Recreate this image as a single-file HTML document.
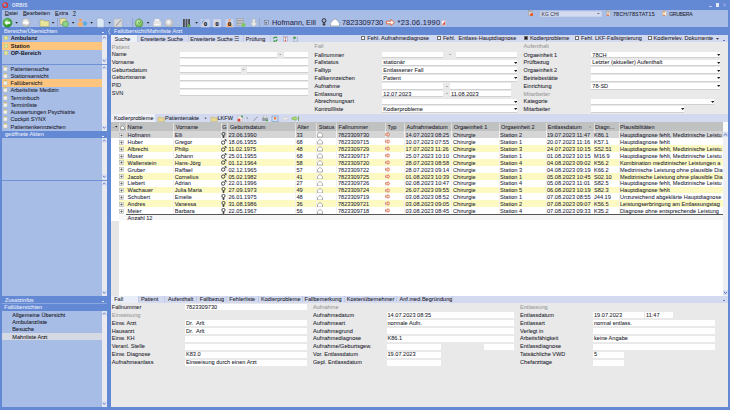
<!DOCTYPE html>
<html><head><meta charset="utf-8">
<style>
html,body{margin:0;padding:0;width:730px;height:410px;overflow:hidden;background:#6489d4;}
body{font-family:"Liberation Sans",sans-serif;font-size:5.6px;color:#1e1e2e;}
.a{position:absolute;}
u{text-decoration-thickness:0.5px;text-underline-offset:0.3px;text-decoration-color:#555a70;}
.t{position:absolute;white-space:nowrap;line-height:7px;-webkit-text-stroke-width:0.06px;}
.sb{width:5px;background:#e9eaf0;}
.sb:before{content:"";position:absolute;left:0.5px;top:0.5px;width:4px;height:5px;background:#dde3f3;}
.sb:after{content:"";position:absolute;left:0.5px;bottom:0.5px;width:4px;height:5px;background:#dde3f3;}
#frame{position:absolute;left:0;top:0;width:730px;height:410px;background:#6489d4;overflow:hidden;}
</style></head><body>
<div id="frame">
  <!-- title bar -->
  <div class="a" style="left:0;top:0;width:730px;height:9.5px;background:#6489d4"></div>
  <svg class="a" style="left:2px;top:1.8px" width="6.5" height="6.5" viewBox="0 0 10 10"><circle cx="5" cy="5" r="3.6" fill="none" stroke="#e0302a" stroke-width="2"/><circle cx="3.2" cy="3" r="1.2" fill="#f0a0a0"/></svg>
  <div class="t" style="left:11.9px;top:1.5px;font-size:4.6px;line-height:7px;color:#e4eaf8;font-weight:bold;letter-spacing:0.2px;-webkit-text-stroke-width:0">ORBIS</div>
  <div class="a" style="left:709px;top:5.8px;width:2.8px;height:0.9px;background:#b8c8f0"></div>
  <div class="a" style="left:715.6px;top:3px;width:3.6px;height:4px;background:#e2e8f8"></div>
  <svg class="a" style="left:722.8px;top:2.9px" width="3.4" height="4" viewBox="0 0 3.4 4"><path d="M0.4 0.4 L3 3.6 M3 0.4 L0.4 3.6" stroke="#a8b4ec" stroke-width="0.7"/></svg>
  <!-- menu + toolbar -->
  <div class="a" style="left:2px;top:9.6px;width:726px;height:17.4px;background:#a8bde6"></div>
  <div class="t" style="left:4.8px;top:10.2px;"><u>D</u>atei</div>
  <div class="t" style="left:23px;top:10.2px;"><u>B</u>earbeiten</div>
  <div class="t" style="left:55px;top:10.2px;"><u>E</u>xtra</div>
  <div class="t" style="left:72.7px;top:10.2px;"><u>?</u></div>
  <!-- toolbar icons -->
  <svg class="a" style="left:0;top:16.7px" width="450" height="11" viewBox="0 0 450 11">
    <defs>
      <radialGradient id="gg" cx="0.4" cy="0.35" r="0.7"><stop offset="0" stop-color="#7fd46a"/><stop offset="1" stop-color="#1f8a1f"/></radialGradient>
      <radialGradient id="gl" cx="0.4" cy="0.35" r="0.7"><stop offset="0" stop-color="#c8f0a8"/><stop offset="1" stop-color="#5aaa48"/></radialGradient>
      <radialGradient id="gr" cx="0.4" cy="0.35" r="0.7"><stop offset="0" stop-color="#f4f4f4"/><stop offset="1" stop-color="#b8b8b8"/></radialGradient>
    </defs>
    <!-- back -->
    <circle cx="7.5" cy="5.8" r="4.5" fill="url(#gg)" stroke="#2a7a2a" stroke-width="0.4"/>
    <path d="M4.5 5.8 L7.2 3.3 L7.2 4.8 L10.3 4.8 L10.3 6.8 L7.2 6.8 L7.2 8.3 Z" fill="#fff"/>
    <path d="M15.3 5 h2.6 l-1.3 1.7z" fill="#222"/>
    <!-- forward grey -->
    <circle cx="26" cy="5.8" r="4.2" fill="url(#gr)" stroke="#aaa" stroke-width="0.4"/>
    <path d="M29 5.8 L26.3 3.3 L26.3 4.8 L23.2 4.8 L23.2 6.8 L26.3 6.8 L26.3 8.3 Z" fill="#fff"/>
    <path d="M33.8 5 h2.6 l-1.3 1.7z" fill="#c0c8d8"/>
    <!-- folder -->
    <path d="M40 3 h3.5 l1 1 h4.5 v5.5 h-9 z" fill="#e8e59a" stroke="#8a8a50" stroke-width="0.4"/>
    <path d="M51.8 5 h2.6 l-1.3 1.7z" fill="#222"/>
    <rect x="57.2" y="1" width="0.6" height="9.5" fill="#8899bb"/>
    <!-- clipboard clock -->
    <rect x="60" y="1.5" width="6" height="6" fill="#e8e0a0" stroke="#9a8a50" stroke-width="0.4"/>
    <circle cx="65.5" cy="7" r="3" fill="#8fd08a" stroke="#3a8a3a" stroke-width="0.5"/>
    <path d="M71.8 5 h2.6 l-1.3 1.7z" fill="#222"/>
    <!-- persons -->
    <circle cx="80.5" cy="3" r="1.6" fill="#f0a060"/>
    <ellipse cx="80.5" cy="7.2" rx="2.8" ry="2.3" fill="#f0b070"/>
    <circle cx="85" cy="6.5" r="2.2" fill="#60a8e0"/>
    <path d="M90.3 5 h2.6 l-1.3 1.7z" fill="#222"/>
    <!-- document -->
    <path d="M97 1.2 h5 l2 2 v7 h-7 z" fill="#dfeaf7" stroke="#7a92b8" stroke-width="0.4"/>
    <path d="M108.3 5 h2.6 l-1.3 1.7z" fill="#222"/>
    <!-- pen grey -->
    <rect x="114" y="2" width="8" height="8" fill="#d8d8d8" stroke="#b0b0b0" stroke-width="0.4"/>
    <path d="M116 9 L121 3" stroke="#888" stroke-width="0.8"/>
    <path d="M126.8 5 h2.6 l-1.3 1.7z" fill="#c0c8d8"/>
    <rect x="132.3" y="1" width="0.6" height="9.5" fill="#8899bb"/>
    <!-- green clock -->
    <circle cx="139" cy="6.2" r="3.9" fill="url(#gl)" stroke="#4a8a3a" stroke-width="0.45"/>
    <rect x="138.4" y="1.3" width="1.2" height="1" fill="#6a8a5a"/>
    <path d="M138.2 5 L139.2 6.4 L141 4.6" stroke="#2a5a2a" stroke-width="0.55" fill="none"/>
    <path d="M146.8 5 h2.6 l-1.3 1.7z" fill="#222"/>
    <!-- printer grey -->
    <path d="M153.3 9.6 V5.6 Q153.3 3.6 155.5 3.6 H159 Q161.3 3.6 161.3 5.6 V9.6 Z" fill="#e4e4e4" stroke="#b8b8b8" stroke-width="0.4"/>
    <rect x="154.6" y="2" width="4.8" height="2.6" fill="#f6f6f6" stroke="#c0c0c0" stroke-width="0.3"/>
    <rect x="154.6" y="7" width="4.8" height="1" fill="#fafafa"/>
    <!-- info grey -->
    <circle cx="169" cy="6" r="4" fill="url(#gr)" stroke="#aaa" stroke-width="0.4"/>
    <rect x="168.6" y="3.5" width="0.9" height="3.8" fill="#fff"/>
    <path d="M176.8 5 h2.6 l-1.3 1.7z" fill="#c0c8d8"/>
    <!-- bars -->
    <rect x="183" y="2" width="1.8" height="8" fill="#4a4a4a"/>
    <rect x="185.6" y="2" width="1.8" height="8" fill="#505050"/>
    <rect x="188.2" y="2" width="1.8" height="6" fill="#4a4a4a"/>
    <path d="M187.8 6.8 l3.6 2 l-3.6 2z" fill="#60b048"/>
    <path d="M195.3 5 h2.6 l-1.3 1.7z" fill="#222"/>
    <!-- 0 boxes -->
    <rect x="200.8" y="2.3" width="9" height="8" fill="#cbd3ec"/><path d="M202 6.5 Q202 3.6 204.5 3.4" fill="none" stroke="#5a90c8" stroke-width="0.9"/>
    <text x="205.6" y="8.6" font-size="5.6" font-weight="bold" text-anchor="middle" fill="#111" stroke="#111" stroke-width="0.2" font-family="Liberation Sans">0</text>
    <rect x="213" y="2.3" width="8" height="8" fill="#cbd3ec"/><path d="M213.8 2.8 H220.2 L217 6.3 L220.2 9.8 H213.8 L217 6.3Z" fill="#d8d8d8"/>
    <text x="217" y="8.6" font-size="5.6" font-weight="bold" text-anchor="middle" fill="#111" stroke="#111" stroke-width="0.2" font-family="Liberation Sans">0</text>
    <rect x="225.5" y="2.3" width="8" height="8" fill="#cbd3ec"/>
    <circle cx="229.5" cy="3.6" r="1.4" fill="#f0a878"/>
    <path d="M226.5 10 Q226.5 5.2 229.5 5.2 Q232.5 5.2 232.5 10Z" fill="#f2b080"/>
    <text x="229.5" y="8.9" font-size="5.6" font-weight="bold" text-anchor="middle" fill="#111" stroke="#111" stroke-width="0.2" font-family="Liberation Sans">0</text>
    <!-- stack -->
    <rect x="237" y="1.5" width="6.5" height="2" fill="#c8c8c8" stroke="#777" stroke-width="0.3"/>
    <rect x="237" y="4" width="6.5" height="2" fill="#c8c8c8" stroke="#777" stroke-width="0.3"/>
    <rect x="237" y="6.5" width="6.5" height="2" fill="#c8c8c8" stroke="#777" stroke-width="0.3"/>
    <circle cx="243.5" cy="8" r="2" fill="#7cc860"/>
    <!-- down arrow grey -->
    <path d="M252.3 2 h3 v4 h2 l-3.5 4 l-3.5 -4 h2 z" fill="#e8e8e8" stroke="#a8a8a8" stroke-width="0.4"/>
    <rect x="259.3" y="1" width="0.6" height="9.5" fill="#8899bb"/>
    <!-- expander -->
    <rect x="264.2" y="3.7" width="4" height="4" fill="#c8d2ea" stroke="#55607a" stroke-width="0.45"/>
    <path d="M265.1 5.7 h2.2 M266.2 4.6 v2.2" stroke="#223" stroke-width="0.5"/>
  </svg>
  <div class="t" style="left:272px;top:18.2px;font-size:7.4px;line-height:10px;color:#22254a">Hofmann, Elli</div>
  <svg class="a" style="left:320.5px;top:18px" width="6" height="8" viewBox="0 0 6 8"><circle cx="3" cy="2.6" r="1.9" fill="none" stroke="#2a2a2a" stroke-width="1"/><path d="M3 4.5 V7.8 M1.5 6.2 H4.5" stroke="#2a2a2a" stroke-width="1"/></svg>
  <svg class="a" style="left:329.5px;top:18px" width="10" height="8.5" viewBox="0 0 10 8.5"><path d="M0.6 8 V5.2 Q2 2.2 5 0.7 Q8 2.2 9.4 5.2 V8 Z" fill="#fff" stroke="#8a8a8a" stroke-width="0.6"/></svg>
  <div class="t" style="left:342px;top:18.2px;font-size:7.4px;line-height:10px;color:#22254a">7823309730</div>
  <svg class="a" style="left:386px;top:19px" width="9" height="7" viewBox="0 0 9 7"><path d="M0.5 2.2 h4.5 V0.5 L8.5 3.5 L5 6.5 V4.8 H0.5 Z" fill="#fff" stroke="#e06030" stroke-width="0.9"/></svg>
  <div class="t" style="left:397.5px;top:18.2px;font-size:7.4px;line-height:10px;color:#22254a;letter-spacing:0.27px">*23.06.1990</div>
  <svg class="a" style="left:440.5px;top:19.8px" width="5" height="6" viewBox="0 0 5 6"><rect x="0.3" y="0.3" width="4.4" height="5.4" fill="#f4eeee" stroke="#b0a0a0" stroke-width="0.4"/><path d="M1 4.8 L4 1.5 L4 4.8Z" fill="#e04040"/></svg>
  <!-- right toolbar -->
  <svg class="a" style="left:528.4px;top:10.3px" width="5.5" height="6.4" viewBox="0 0 5.5 6.4"><rect x="0.4" y="0.4" width="4" height="5.2" fill="#d8d4d4" stroke="#8a8a8a" stroke-width="0.4"/><rect x="1" y="1.3" width="2.8" height="0.5" fill="#777"/><circle cx="3.6" cy="4.6" r="1.6" fill="#e85828"/></svg>
  <div class="a" style="left:539.7px;top:10.5px;width:62.3px;height:6.2px;background:#d4dbf1;box-shadow:inset 0 0 0 0.4px #bcc6e2"></div>
  <div class="t" style="left:541.6px;top:10.5px;font-size:4.9px;line-height:7px;color:#333340;letter-spacing:0.1px">KG CHI</div>
  <svg class="a" style="left:596.8px;top:12.9px" width="2.8" height="1.6" viewBox="0 0 2.8 1.6"><path d="M0 0 H2.8 L1.4 1.6 Z" fill="#667"/></svg>
  <svg class="a" style="left:606.2px;top:10px" width="5" height="6.3" viewBox="0 0 5 6.3"><rect x="0.4" y="0.4" width="4" height="5.4" fill="#e8e4e4" stroke="#909090" stroke-width="0.4"/><rect x="1" y="1.4" width="2.8" height="0.5" fill="#888"/><rect x="1" y="2.6" width="2.8" height="0.5" fill="#888"/><path d="M0.4 5.8 L2.2 3.6 L3 5.8Z" fill="#e86a30"/></svg>
  <div class="t" style="left:613px;top:10.8px;font-size:5.3px;line-height:7px;letter-spacing:0.17px">78CH/78STAT15</div>
  <svg class="a" style="left:661.6px;top:10px" width="5.5" height="6.3" viewBox="0 0 5.5 6.3"><rect x="0.4" y="1" width="4.2" height="4.8" fill="#f0ece8" stroke="#a09890" stroke-width="0.4"/><circle cx="2" cy="1.8" r="1.1" fill="#f0a060"/><path d="M0.6 5.8 Q1.8 3.2 3.2 5.8Z" fill="#e87838"/></svg>
  <div class="t" style="left:669.2px;top:10.8px;font-size:5.1px;line-height:7px;letter-spacing:-0.3px">GRUBERA</div>
  <!-- left panel -->
  <div class="t" style="left:4px;top:28.00px;color:#e4eafa">Bereiche/Übersichten</div>
  <div class="a" style="left:102.2px;top:32.40px;width:2.00px;height:0.70px;background:#e4eafa;"></div>
  <svg class="a" style="left:107.6px;top:27.5px" width="3" height="7" viewBox="0 0 3 7"><path d="M2.3 0.6 Q0.9 1.2 1.2 2.6 Q1.2 3.4 0.4 3.5 Q1.2 3.7 1.2 4.4 Q0.9 5.8 2.3 6.4" fill="none" stroke="#e4eafa" stroke-width="0.6"/></svg>
  <div class="a" style="left:2px;top:34.80px;width:100.20px;height:29.20px;background:#a8bde5;"></div>
  <div class="a" style="left:2px;top:42.00px;width:100.20px;height:7.50px;background:#fdc57e;"></div>
  <div class="a" style="left:4.2px;top:36.30px;width:3.80px;height:3.80px;background:#dfe49c;box-shadow:inset 0 0 0 0.35px #a8ac78;"></div>
  <div class="t" style="left:10.7px;top:35.30px;font-weight:bold;color:#15151e;-webkit-text-stroke-width:0">Ambulanz</div>
  <div class="a" style="left:4.2px;top:43.80px;width:3.80px;height:3.80px;background:#dfe49c;box-shadow:inset 0 0 0 0.35px #a8ac78;"></div>
  <div class="t" style="left:10.7px;top:42.80px;font-weight:bold;color:#15151e;-webkit-text-stroke-width:0">Station</div>
  <div class="a" style="left:4.2px;top:51.30px;width:3.80px;height:3.80px;background:#dfe49c;box-shadow:inset 0 0 0 0.35px #a8ac78;"></div>
  <div class="t" style="left:10.7px;top:50.30px;font-weight:bold;color:#15151e;-webkit-text-stroke-width:0">OP-Bereich</div>
  <div class="a" style="left:102.2px;top:34.80px;width:4.60px;height:29.20px;background:#e9e9ee;"></div>
  <div class="a" style="left:102.2px;top:35.10px;width:4.60px;height:5.20px;background:#dfe4f2;"></div>
  <div class="a" style="left:102.2px;top:58.00px;width:4.60px;height:5.20px;background:#dfe4f2;"></div>
  <svg class="a" style="left:102.2px;top:35.10px" width="4.6" height="5.2" viewBox="0 0 4.6 5.2"><path d="M0.9 3.5 L2.3 1.8 L3.7 3.5" fill="none" stroke="#5060b8" stroke-width="0.75"/></svg>
  <svg class="a" style="left:102.2px;top:58.00px" width="4.6" height="5.2" viewBox="0 0 4.6 5.2"><path d="M0.9 1.7 L2.3 3.4 L3.7 1.7" fill="none" stroke="#5060b8" stroke-width="0.75"/></svg>
  <div class="a" style="left:2px;top:64.00px;width:105.00px;height:1.00px;background:#6f92d6;"></div>
  <div class="a" style="left:2px;top:65.00px;width:100.20px;height:65.60px;background:#a8bde5;"></div>
  <div class="a" style="left:2px;top:79.40px;width:100.20px;height:7.30px;background:#fdc57e;"></div>
  <svg class="a" style="left:3.4px;top:65.70px" width="4.6" height="5.4" viewBox="0 0 4.6 5.4"><path d="M0.3 0.9 H4.3 V5.1 H0.3 Z" fill="#f2f2ee" stroke="#a0a098" stroke-width="0.35"/><rect x="1.4" y="0.2" width="1.8" height="1.2" fill="#d8b840"/></svg>
  <div class="t" style="left:10.5px;top:65.80px;color:#1a1a2c">Patientensuche</div>
  <svg class="a" style="left:3.4px;top:72.92px" width="4.6" height="5.4" viewBox="0 0 4.6 5.4"><path d="M0.3 0.9 H4.3 V5.1 H0.3 Z" fill="#f2f2ee" stroke="#a0a098" stroke-width="0.35"/><rect x="1.4" y="0.2" width="1.8" height="1.2" fill="#d8b840"/></svg>
  <div class="t" style="left:10.5px;top:73.02px;color:#1a1a2c">Stationsansicht</div>
  <svg class="a" style="left:3.4px;top:80.14px" width="4.6" height="5.4" viewBox="0 0 4.6 5.4"><path d="M0.3 0.9 H4.3 V5.1 H0.3 Z" fill="#f2f2ee" stroke="#a0a098" stroke-width="0.35"/><rect x="1.4" y="0.2" width="1.8" height="1.2" fill="#d8b840"/></svg>
  <div class="t" style="left:10.5px;top:80.24px;color:#1a1a2c">Fallübersicht</div>
  <svg class="a" style="left:3.4px;top:87.36px" width="4.6" height="5.4" viewBox="0 0 4.6 5.4"><path d="M0.3 0.9 H4.3 V5.1 H0.3 Z" fill="#f2f2ee" stroke="#a0a098" stroke-width="0.35"/><rect x="1.4" y="0.2" width="1.8" height="1.2" fill="#d8b840"/></svg>
  <div class="t" style="left:10.5px;top:87.46px;color:#1a1a2c">Arbeitsliste Medizin</div>
  <svg class="a" style="left:3.4px;top:94.58px" width="4.6" height="5.4" viewBox="0 0 4.6 5.4"><path d="M0.3 0.9 H4.3 V5.1 H0.3 Z" fill="#f2f2ee" stroke="#a0a098" stroke-width="0.35"/><rect x="1.4" y="0.2" width="1.8" height="1.2" fill="#d8b840"/></svg>
  <div class="t" style="left:10.5px;top:94.68px;color:#1a1a2c">Terminbuch</div>
  <svg class="a" style="left:3.4px;top:101.80px" width="4.6" height="5.4" viewBox="0 0 4.6 5.4"><path d="M0.3 0.9 H4.3 V5.1 H0.3 Z" fill="#f2f2ee" stroke="#a0a098" stroke-width="0.35"/><rect x="1.4" y="0.2" width="1.8" height="1.2" fill="#d8b840"/></svg>
  <div class="t" style="left:10.5px;top:101.90px;color:#1a1a2c">Terminliste</div>
  <svg class="a" style="left:3.4px;top:109.02px" width="4.6" height="5.4" viewBox="0 0 4.6 5.4"><path d="M0.3 0.9 H4.3 V5.1 H0.3 Z" fill="#f2f2ee" stroke="#a0a098" stroke-width="0.35"/><rect x="1.4" y="0.2" width="1.8" height="1.2" fill="#d8b840"/></svg>
  <div class="t" style="left:10.5px;top:109.12px;color:#1a1a2c">Auswertungen Psychiatrie</div>
  <svg class="a" style="left:3.4px;top:116.24px" width="4.6" height="5.4" viewBox="0 0 4.6 5.4"><path d="M0.3 0.9 H4.3 V5.1 H0.3 Z" fill="#f2f2ee" stroke="#a0a098" stroke-width="0.35"/><rect x="1.4" y="0.2" width="1.8" height="1.2" fill="#d8b840"/></svg>
  <div class="t" style="left:10.5px;top:116.34px;color:#1a1a2c">Cockpit SYNX</div>
  <svg class="a" style="left:3.4px;top:123.46px" width="4.6" height="5.4" viewBox="0 0 4.6 5.4"><path d="M0.3 0.9 H4.3 V5.1 H0.3 Z" fill="#f2f2ee" stroke="#a0a098" stroke-width="0.35"/><rect x="1.4" y="0.2" width="1.8" height="1.2" fill="#d8b840"/></svg>
  <div class="t" style="left:10.5px;top:123.56px;color:#1a1a2c">Patientenkennzeichen</div>
  <div class="a" style="left:102.2px;top:65.00px;width:4.60px;height:65.60px;background:#e9e9ee;"></div>
  <div class="a" style="left:102.2px;top:65.30px;width:4.60px;height:5.20px;background:#dfe4f2;"></div>
  <div class="a" style="left:102.2px;top:124.60px;width:4.60px;height:5.20px;background:#dfe4f2;"></div>
  <svg class="a" style="left:102.2px;top:65.30px" width="4.6" height="5.2" viewBox="0 0 4.6 5.2"><path d="M0.9 3.5 L2.3 1.8 L3.7 3.5" fill="none" stroke="#5060b8" stroke-width="0.75"/></svg>
  <svg class="a" style="left:102.2px;top:124.60px" width="4.6" height="5.2" viewBox="0 0 4.6 5.2"><path d="M0.9 1.7 L2.3 3.4 L3.7 1.7" fill="none" stroke="#5060b8" stroke-width="0.75"/></svg>
  <div class="t" style="left:5px;top:131.40px;color:#e4eafa">geöffnete Akten</div>
  <div class="a" style="left:101.5px;top:135.60px;width:2.30px;height:0.70px;background:#e4eafa;"></div>
  <div class="a" style="left:2px;top:137.60px;width:100.20px;height:42.50px;background:#a8bde5;"></div>
  <div class="a" style="left:102.2px;top:137.60px;width:4.60px;height:42.50px;background:#e9e9ee;"></div>
  <div class="a" style="left:102.2px;top:137.90px;width:4.60px;height:5.20px;background:#dfe4f2;"></div>
  <div class="a" style="left:102.2px;top:174.10px;width:4.60px;height:5.20px;background:#dfe4f2;"></div>
  <svg class="a" style="left:102.2px;top:137.90px" width="4.6" height="5.2" viewBox="0 0 4.6 5.2"><path d="M0.9 3.5 L2.3 1.8 L3.7 3.5" fill="none" stroke="#5060b8" stroke-width="0.75"/></svg>
  <svg class="a" style="left:102.2px;top:174.10px" width="4.6" height="5.2" viewBox="0 0 4.6 5.2"><path d="M0.9 1.7 L2.3 3.4 L3.7 1.7" fill="none" stroke="#5060b8" stroke-width="0.75"/></svg>
  <div class="a" style="left:2px;top:180.10px;width:105.00px;height:1.00px;background:#6f92d6;"></div>
  <div class="a" style="left:2px;top:181.00px;width:100.20px;height:115.00px;background:#a8bde5;"></div>
  <div class="a" style="left:102.2px;top:181.00px;width:4.60px;height:115.00px;background:#e9e9ee;"></div>
  <div class="a" style="left:102.2px;top:181.30px;width:4.60px;height:5.20px;background:#dfe4f2;"></div>
  <div class="a" style="left:102.2px;top:290.00px;width:4.60px;height:5.20px;background:#dfe4f2;"></div>
  <svg class="a" style="left:102.2px;top:181.30px" width="4.6" height="5.2" viewBox="0 0 4.6 5.2"><path d="M0.9 3.5 L2.3 1.8 L3.7 3.5" fill="none" stroke="#5060b8" stroke-width="0.75"/></svg>
  <svg class="a" style="left:102.2px;top:290.00px" width="4.6" height="5.2" viewBox="0 0 4.6 5.2"><path d="M0.9 1.7 L2.3 3.4 L3.7 1.7" fill="none" stroke="#5060b8" stroke-width="0.75"/></svg>
  <div class="t" style="left:5px;top:297.00px;color:#e4eafa">Zusatzinfos</div>
  <div class="a" style="left:101.5px;top:301.00px;width:2.30px;height:0.70px;background:#e4eafa;"></div>
  <div class="a" style="left:2px;top:303.10px;width:105.00px;height:0.50px;background:#8aa7e0;"></div>
  <div class="t" style="left:4.3px;top:304.40px;color:#e4eafa">Fallübersichten</div>
  <div class="a" style="left:2px;top:311.00px;width:100.20px;height:95.60px;background:#a8bde5;"></div>
  <div class="a" style="left:2px;top:333.30px;width:100.20px;height:7.00px;background:#d5d9e3;"></div>
  <div class="t" style="left:12.3px;top:312.00px;color:#15151e">Allgemeine Übersicht</div>
  <div class="t" style="left:12.3px;top:319.20px;color:#15151e">Ambulanzliste</div>
  <div class="t" style="left:12.3px;top:326.40px;color:#15151e">Besuche</div>
  <div class="t" style="left:12.3px;top:333.60px;color:#15151e">Mahnliste Arzt</div>
  <div class="a" style="left:102.2px;top:311.00px;width:4.60px;height:95.60px;background:#e9e9ee;"></div>
  <div class="a" style="left:102.2px;top:311.30px;width:4.60px;height:5.20px;background:#dfe4f2;"></div>
  <div class="a" style="left:102.2px;top:400.60px;width:4.60px;height:5.20px;background:#dfe4f2;"></div>
  <svg class="a" style="left:102.2px;top:311.30px" width="4.6" height="5.2" viewBox="0 0 4.6 5.2"><path d="M0.9 3.5 L2.3 1.8 L3.7 3.5" fill="none" stroke="#5060b8" stroke-width="0.75"/></svg>
  <svg class="a" style="left:102.2px;top:400.60px" width="4.6" height="5.2" viewBox="0 0 4.6 5.2"><path d="M0.9 1.7 L2.3 3.4 L3.7 1.7" fill="none" stroke="#5060b8" stroke-width="0.75"/></svg>
  <!-- main -->
  <div class="t" style="left:114px;top:28.20px;color:#e4eafa">Fallübersicht/Mahnliste Arzt</div>
  <div class="a" style="left:111px;top:34.80px;width:617.00px;height:7.60px;background:#d3d9ef;"></div>
  <div class="a" style="left:111px;top:34.80px;width:26.40px;height:7.60px;background:#eef0f8;"></div>
  <div class="t" style="left:114.5px;top:35.80px;">Suche</div>
  <div class="t" style="left:140.5px;top:35.80px;">Erweiterte Suche</div>
  <div class="t" style="left:190.2px;top:35.80px;">Erweiterte Suche ☰</div>
  <div class="t" style="left:245.8px;top:35.80px;">Prüfung</div>
  <div class="a" style="left:137.4px;top:35.30px;width:0.60px;height:6.50px;background:#c2cbe6;"></div>
  <div class="a" style="left:187.9px;top:35.30px;width:0.60px;height:6.50px;background:#c2cbe6;"></div>
  <div class="a" style="left:243px;top:35.30px;width:0.60px;height:6.50px;background:#c2cbe6;"></div>
  <div class="a" style="left:270.2px;top:35.30px;width:0.60px;height:6.50px;background:#c2cbe6;"></div>
  <svg class="a" style="left:271.5px;top:35.8px" width="28" height="6.5" viewBox="0 0 28 6.5"><path d="M1.3 2.6 Q2.5 0.6 4.6 1.4" fill="none" stroke="#3a9a3a" stroke-width="1.1"/><path d="M5.4 3.6 Q4.4 5.8 2 5.1" fill="none" stroke="#3a9a3a" stroke-width="1.1"/><path d="M4 0.4 L5.6 1.6 L4 2.6Z M2.6 4 L1 5 L2.6 6.2Z" fill="#3a9a3a"/><rect x="11.2" y="0.6" width="4.4" height="5.4" fill="#e8ecf4" stroke="#8090b0" stroke-width="0.45"/><path d="M12.3 1.4 H14.5 L13.4 3.3 L14.5 5.2 H12.3 L13.4 3.3Z" fill="#e04848"/><rect x="21.6" y="1.8" width="4.2" height="4.2" fill="#c8d8e8" stroke="#8090a8" stroke-width="0.35"/><circle cx="22.6" cy="1.8" r="1.2" fill="#48a048"/></svg>
  <div class="a" style="left:361.3px;top:36.30px;width:4.20px;height:4.20px;background:#fbfbfb;box-sizing:border-box;border:0.45px solid #707070;"></div>
  <div class="t" style="left:367.3px;top:35.30px;">Fehl. Aufnahmediagnose</div>
  <div class="a" style="left:436.9px;top:36.30px;width:4.20px;height:4.20px;background:#fbfbfb;box-sizing:border-box;border:0.45px solid #707070;"></div>
  <div class="t" style="left:442.9px;top:35.30px;">Fehl.&nbsp; Entlass-Hauptdiagnose</div>
  <div class="a" style="left:523.9px;top:36.30px;width:4.20px;height:4.20px;background:#fbfbfb;box-sizing:border-box;border:0.45px solid #707070;"></div>
  <div class="a" style="left:524.9px;top:37.30px;width:2.20px;height:2.20px;background:#1a1a1a;"></div>
  <div class="t" style="left:529.9px;top:35.30px;">Kodierprobleme</div>
  <div class="a" style="left:575px;top:36.30px;width:4.20px;height:4.20px;background:#fbfbfb;box-sizing:border-box;border:0.45px solid #707070;"></div>
  <div class="t" style="left:581px;top:35.30px;">Fehl. LKF-Fallsignierung</div>
  <div class="a" style="left:647.6px;top:36.30px;width:4.20px;height:4.20px;background:#fbfbfb;box-sizing:border-box;border:0.45px solid #707070;"></div>
  <div class="t" style="left:653.6px;top:35.30px;">Kodierrelev. Dokumente</div>
  <svg class="a" style="left:716.20px;top:37.80px" width="3" height="1.8" viewBox="0 0 3 1.8"><path d="M0 0 H3 L1.5 1.8 Z" fill="#333"/></svg>
  <div class="a" style="left:722.8px;top:39.80px;width:2.40px;height:0.70px;background:#6a78b8;"></div>
  <div class="a" style="left:111px;top:42.40px;width:617.00px;height:71.90px;background:#e9e9e9;"></div>
  <div class="t" style="left:111.8px;top:43.50px;color:#9a9a9a">Patient</div>
  <div class="t" style="left:111.8px;top:51.20px;">Name</div>
  <div class="a" style="left:179.7px;top:51.60px;width:97.70px;height:5.40px;background:#fff;border-bottom:0.9px solid #d0d0d0;"></div>
  <div class="t" style="left:279.3px;top:51.00px;">-</div>
  <div class="a" style="left:284.3px;top:51.60px;width:24.10px;height:5.40px;background:#fff;border-bottom:0.9px solid #d0d0d0;"></div>
  <div class="t" style="left:111.8px;top:58.90px;">Vorname</div>
  <div class="a" style="left:179.7px;top:59.30px;width:128.70px;height:5.40px;background:#fff;border-bottom:0.9px solid #d0d0d0;"></div>
  <div class="t" style="left:111.8px;top:66.60px;">Geburtsdatum</div>
  <div class="a" style="left:179.7px;top:67.00px;width:61.50px;height:5.40px;background:#fff;border-bottom:0.9px solid #d0d0d0;"></div>
  <div class="t" style="left:242.6px;top:66.40px;">-</div>
  <div class="a" style="left:246.7px;top:67.00px;width:61.70px;height:5.40px;background:#fff;border-bottom:0.9px solid #d0d0d0;"></div>
  <div class="t" style="left:111.8px;top:74.30px;">Geburtsname</div>
  <div class="a" style="left:179.7px;top:74.70px;width:128.70px;height:5.40px;background:#fff;border-bottom:0.9px solid #d0d0d0;"></div>
  <div class="t" style="left:111.8px;top:82.00px;">PID</div>
  <div class="a" style="left:179.7px;top:82.40px;width:128.70px;height:5.40px;background:#fff;border-bottom:0.9px solid #d0d0d0;"></div>
  <div class="t" style="left:111.8px;top:89.70px;">SVN</div>
  <div class="a" style="left:179.7px;top:90.10px;width:128.70px;height:5.40px;background:#fff;border-bottom:0.9px solid #d0d0d0;"></div>
  <div class="t" style="left:314.5px;top:43.30px;color:#9a9a9a">Fall</div>
  <div class="t" style="left:314.5px;top:51.60px;">Fallnummer</div>
  <div class="a" style="left:381.7px;top:51.90px;width:61.50px;height:5.60px;background:#fff;border-bottom:0.5px solid #d0d0d0;"></div>
  <div class="t" style="left:449px;top:51.40px;">-</div>
  <div class="a" style="left:456.2px;top:51.90px;width:61.20px;height:5.60px;background:#fff;border-bottom:0.5px solid #d0d0d0;"></div>
  <div class="t" style="left:314.5px;top:59.38px;">Fallstatus</div>
  <div class="a" style="left:381.7px;top:59.68px;width:135.70px;height:5.60px;background:#fff;border-bottom:0.5px solid #d0d0d0;"></div>
  <div class="t" style="left:383.3px;top:59.38px;">stationär</div>
  <svg class="a" style="left:513.50px;top:61.78px" width="3.4" height="2" viewBox="0 0 3.4 2"><path d="M0 0 H3.4 L1.7 2 Z" fill="#222"/></svg>
  <div class="t" style="left:314.5px;top:67.16px;">Falltyp</div>
  <div class="a" style="left:381.7px;top:67.46px;width:135.70px;height:5.60px;background:#fff;border-bottom:0.5px solid #d0d0d0;"></div>
  <div class="t" style="left:383.3px;top:67.16px;">Entlassener Fall</div>
  <svg class="a" style="left:513.50px;top:69.56px" width="3.4" height="2" viewBox="0 0 3.4 2"><path d="M0 0 H3.4 L1.7 2 Z" fill="#222"/></svg>
  <div class="t" style="left:314.5px;top:74.94px;">Fallkennzeichen</div>
  <div class="a" style="left:381.7px;top:75.24px;width:135.70px;height:5.60px;background:#fff;border-bottom:0.5px solid #d0d0d0;"></div>
  <div class="t" style="left:383.3px;top:74.94px;">Patient</div>
  <svg class="a" style="left:513.50px;top:77.34px" width="3.4" height="2" viewBox="0 0 3.4 2"><path d="M0 0 H3.4 L1.7 2 Z" fill="#222"/></svg>
  <div class="t" style="left:314.5px;top:82.72px;">Aufnahme</div>
  <div class="a" style="left:381.7px;top:83.02px;width:61.50px;height:5.60px;background:#fff;border-bottom:0.5px solid #d0d0d0;"></div>
  <div class="t" style="left:446px;top:82.52px;">-</div>
  <div class="a" style="left:449.5px;top:83.02px;width:61.80px;height:5.60px;background:#fff;border-bottom:0.5px solid #d0d0d0;"></div>
  <div class="t" style="left:314.5px;top:90.50px;">Entlassung</div>
  <div class="a" style="left:381.7px;top:90.80px;width:61.50px;height:5.60px;background:#fff;border-bottom:0.5px solid #d0d0d0;"></div>
  <div class="t" style="left:446px;top:90.30px;">-</div>
  <div class="a" style="left:449.5px;top:90.80px;width:61.80px;height:5.60px;background:#fff;border-bottom:0.5px solid #d0d0d0;"></div>
  <div class="t" style="left:383.3px;top:90.50px;">12.07.2023</div>
  <div class="t" style="left:451px;top:90.50px;">11.08.2023</div>
  <div class="t" style="left:314.5px;top:98.28px;">Abrechnungsart</div>
  <div class="a" style="left:381.7px;top:98.58px;width:135.70px;height:5.60px;background:#fff;border-bottom:0.5px solid #d0d0d0;"></div>
  <svg class="a" style="left:513.50px;top:100.68px" width="3.4" height="2" viewBox="0 0 3.4 2"><path d="M0 0 H3.4 L1.7 2 Z" fill="#222"/></svg>
  <div class="t" style="left:314.5px;top:106.06px;">Kontrollliste</div>
  <div class="a" style="left:381.7px;top:106.36px;width:135.70px;height:5.60px;background:#fff;border-bottom:0.5px solid #d0d0d0;"></div>
  <div class="t" style="left:383.3px;top:106.06px;">Kodierprobleme</div>
  <svg class="a" style="left:513.50px;top:108.46px" width="3.4" height="2" viewBox="0 0 3.4 2"><path d="M0 0 H3.4 L1.7 2 Z" fill="#222"/></svg>
  <div class="t" style="left:523.6px;top:43.30px;color:#9a9a9a">Aufenthalt</div>
  <div class="t" style="left:523.6px;top:51.60px;">Orgaeinheit 1</div>
  <div class="a" style="left:590.8px;top:51.90px;width:129.60px;height:5.60px;background:#fff;border-bottom:0.5px solid #d0d0d0;"></div>
  <div class="t" style="left:592.3px;top:51.60px;">78CH</div>
  <svg class="a" style="left:716.70px;top:54.00px" width="3.4" height="2" viewBox="0 0 3.4 2"><path d="M0 0 H3.4 L1.7 2 Z" fill="#222"/></svg>
  <div class="t" style="left:523.6px;top:59.38px;">Prüfbezug</div>
  <div class="a" style="left:590.8px;top:59.68px;width:129.60px;height:5.60px;background:#fff;border-bottom:0.5px solid #d0d0d0;"></div>
  <div class="t" style="left:592.3px;top:59.38px;">Letzter (aktueller) Aufenthalt</div>
  <svg class="a" style="left:716.70px;top:61.78px" width="3.4" height="2" viewBox="0 0 3.4 2"><path d="M0 0 H3.4 L1.7 2 Z" fill="#222"/></svg>
  <div class="t" style="left:523.6px;top:67.16px;">Orgaeinheit 2</div>
  <div class="a" style="left:590.8px;top:67.46px;width:129.60px;height:5.60px;background:#fff;border-bottom:0.5px solid #d0d0d0;"></div>
  <svg class="a" style="left:716.70px;top:69.56px" width="3.4" height="2" viewBox="0 0 3.4 2"><path d="M0 0 H3.4 L1.7 2 Z" fill="#222"/></svg>
  <div class="t" style="left:523.6px;top:74.94px;">Betriebsstätte</div>
  <div class="a" style="left:590.8px;top:75.24px;width:129.60px;height:5.60px;background:#fff;border-bottom:0.5px solid #d0d0d0;"></div>
  <svg class="a" style="left:716.70px;top:77.34px" width="3.4" height="2" viewBox="0 0 3.4 2"><path d="M0 0 H3.4 L1.7 2 Z" fill="#222"/></svg>
  <div class="t" style="left:523.6px;top:82.72px;">Einrichtung</div>
  <div class="a" style="left:590.8px;top:83.02px;width:129.60px;height:5.60px;background:#fff;border-bottom:0.5px solid #d0d0d0;"></div>
  <div class="t" style="left:592.3px;top:82.72px;">78-SD</div>
  <svg class="a" style="left:716.70px;top:85.12px" width="3.4" height="2" viewBox="0 0 3.4 2"><path d="M0 0 H3.4 L1.7 2 Z" fill="#222"/></svg>
  <div class="t" style="left:523.6px;top:90.50px;color:#9a9a9a">Mitarbeiter</div>
  <div class="t" style="left:523.6px;top:98.28px;">Kategorie</div>
  <div class="a" style="left:590.8px;top:98.58px;width:123.50px;height:5.60px;background:#fff;border-bottom:0.5px solid #d0d0d0;"></div>
  <svg class="a" style="left:710.60px;top:100.68px" width="3.4" height="2" viewBox="0 0 3.4 2"><path d="M0 0 H3.4 L1.7 2 Z" fill="#222"/></svg>
  <div class="t" style="left:523.6px;top:106.06px;">Mitarbeiter</div>
  <div class="a" style="left:590.8px;top:106.36px;width:93.40px;height:5.60px;background:#fff;border-bottom:0.5px solid #d0d0d0;"></div>
  <svg class="a" style="left:680.50px;top:108.46px" width="3.4" height="2" viewBox="0 0 3.4 2"><path d="M0 0 H3.4 L1.7 2 Z" fill="#222"/></svg>
  <!-- grid -->
  <div class="a" style="left:111px;top:114.30px;width:617.00px;height:7.80px;background:#d3d9ef;"></div>
  <div class="a" style="left:111px;top:114.30px;width:43.70px;height:7.80px;background:#eef0f8;"></div>
  <div class="t" style="left:114px;top:115.10px;">Kodierprobleme</div>
  <svg class="a" style="left:157px;top:115px" width="145" height="7" viewBox="0 0 145 7"><path d="M1 2 h2.5 l0.8 0.8 h3 v3.8 h-6.3z" fill="#e8d890" stroke="#9a8a50" stroke-width="0.3"/><path d="M47.5 2.8 h2.2 l-1.1 1.3z" fill="#222"/><path d="M54 2 h2.5 l0.8 0.8 h3 v3.8 h-6.3z" fill="#e8d890" stroke="#9a8a50" stroke-width="0.3"/><rect x="80.5" y="1" width="5" height="5.5" fill="#f4e8e8" stroke="#999" stroke-width="0.3"/><circle cx="82" cy="5" r="1.5" fill="#e04040"/><circle cx="85" cy="1.5" r="1" fill="#40a040"/><path d="M89.3 2.8 h1.6 l-0.8 1z" fill="#222"/><path d="M96.5 6 L100.5 1.5" stroke="#999" stroke-width="1"/><rect x="105" y="2.5" width="6" height="3.5" rx="1" fill="#9aa0a8"/><rect x="106.5" y="1" width="3" height="2" fill="#eee" stroke="#888" stroke-width="0.3"/><circle cx="110" cy="5.5" r="1" fill="#4a4"/><rect x="115" y="1" width="6" height="5.8" fill="#cfe0f4" stroke="#5f86c0" stroke-width="0.5"/><rect x="117" y="2" width="2.2" height="2.5" fill="#f08040"/><path d="M125.5 3.5 L128 1.5 V2.6 H131 V4.4 H128 V5.5 Z" fill="#f4f4f4" stroke="#b8b8b8" stroke-width="0.4"/><path d="M140.5 3.5 L138 1.5 V2.6 H135 V4.4 H138 V5.5 Z" fill="#b8e070" stroke="#4a9a2a" stroke-width="0.4"/><rect x="141" y="1.2" width="0.7" height="4.6" fill="#4a9a2a"/></svg>
  <div class="t" style="left:165px;top:115.10px;">Patientenakte</div>
  <div class="t" style="left:217.4px;top:115.10px;">LKFW</div>
  <div class="a" style="left:111px;top:122.10px;width:611.50px;height:9.20px;background:#c0c1c1;"></div>
  <div class="a" style="left:118.5px;top:122.60px;width:0.70px;height:8.30px;background:#dedede;"></div>
  <div class="a" style="left:126px;top:122.60px;width:0.70px;height:8.30px;background:#dedede;"></div>
  <div class="a" style="left:172.9px;top:122.60px;width:0.70px;height:8.30px;background:#dedede;"></div>
  <div class="a" style="left:220.7px;top:122.60px;width:0.70px;height:8.30px;background:#dedede;"></div>
  <div class="a" style="left:227.3px;top:122.60px;width:0.70px;height:8.30px;background:#dedede;"></div>
  <div class="a" style="left:295.3px;top:122.60px;width:0.70px;height:8.30px;background:#dedede;"></div>
  <div class="a" style="left:316.2px;top:122.60px;width:0.70px;height:8.30px;background:#dedede;"></div>
  <div class="a" style="left:336.2px;top:122.60px;width:0.70px;height:8.30px;background:#dedede;"></div>
  <div class="a" style="left:385px;top:122.60px;width:0.70px;height:8.30px;background:#dedede;"></div>
  <div class="a" style="left:404px;top:122.60px;width:0.70px;height:8.30px;background:#dedede;"></div>
  <div class="a" style="left:451.3px;top:122.60px;width:0.70px;height:8.30px;background:#dedede;"></div>
  <div class="a" style="left:498.9px;top:122.60px;width:0.70px;height:8.30px;background:#dedede;"></div>
  <div class="a" style="left:545.6px;top:122.60px;width:0.70px;height:8.30px;background:#dedede;"></div>
  <div class="a" style="left:593.8px;top:122.60px;width:0.70px;height:8.30px;background:#dedede;"></div>
  <div class="a" style="left:618.5px;top:122.60px;width:0.70px;height:8.30px;background:#dedede;"></div>
  <div class="t" style="left:127.6px;top:123.20px;line-height:8px">Name</div>
  <div class="t" style="left:175.8px;top:123.20px;line-height:8px">Vorname</div>
  <div class="t" style="left:222.3px;top:123.20px;line-height:8px">G</div>
  <div class="t" style="left:230px;top:123.20px;line-height:8px">Geburtsdatum</div>
  <div class="t" style="left:297.3px;top:123.20px;line-height:8px">Alter</div>
  <div class="t" style="left:318.7px;top:123.20px;line-height:8px">Status</div>
  <div class="t" style="left:338.6px;top:123.20px;line-height:8px">Fallnummer</div>
  <div class="t" style="left:387.4px;top:123.20px;line-height:8px">Typ</div>
  <div class="t" style="left:406.5px;top:123.20px;line-height:8px">Aufnahmedatum</div>
  <div class="t" style="left:453.7px;top:123.20px;line-height:8px">Orgaeinheit 1</div>
  <div class="t" style="left:501px;top:123.20px;line-height:8px">Orgaeinheit 2</div>
  <div class="t" style="left:547.7px;top:123.20px;line-height:8px">Entlassdatum</div>
  <div class="t" style="left:595px;top:123.20px;line-height:8px">Diagn...</div>
  <div class="t" style="left:620px;top:123.20px;line-height:8px">Plausibilitäten</div>
  <div class="t" style="left:112.5px;top:123.20px;line-height:8px;color:#777">-</div>
  <svg class="a" style="left:115.00px;top:126.40px" width="2.6" height="1.6" viewBox="0 0 2.6 1.6"><path d="M0 0 H2.6 L1.3 1.6 Z" fill="#222"/></svg>
  <svg class="a" style="left:120px;top:124.5px" width="5" height="5" viewBox="0 0 5 5"><path d="M0.6 4.4 V2.6 L2.5 0.7 L4.4 2.6 V4.4 Z" fill="#fff" stroke="#555" stroke-width="0.5"/></svg>
  <svg class="a" style="left:589px;top:126.3px" width="2.4" height="1.5" viewBox="0 0 2.4 1.5"><path d="M0 1.5 H2.4 L1.2 0 Z" fill="#888"/></svg>
  <div class="a" style="left:111px;top:131.20px;width:611.50px;height:164.40px;background:#ffffff;"></div>
  <div class="a" style="left:111px;top:221.00px;width:8.00px;height:74.60px;background:#e6e6e6;"></div>
  <div class="a" style="left:119px;top:131.20px;width:603.50px;height:6.92px;background:#d5d5d5;"></div>
  <div class="a" style="left:111px;top:131.20px;width:8.00px;height:6.92px;background:#d5d5d5;"></div>
  <div class="a" style="left:119px;top:145.04px;width:603.50px;height:6.92px;background:#fcf9c2;"></div>
  <div class="a" style="left:119px;top:158.88px;width:603.50px;height:6.92px;background:#fcf9c2;"></div>
  <div class="a" style="left:119px;top:172.72px;width:603.50px;height:6.92px;background:#fcf9c2;"></div>
  <div class="a" style="left:119px;top:186.56px;width:603.50px;height:6.92px;background:#fcf9c2;"></div>
  <div class="a" style="left:119px;top:200.40px;width:603.50px;height:6.92px;background:#fcf9c2;"></div>
  <div class="a" style="left:172.9px;top:131.20px;width:0.50px;height:83.04px;background:#f1f1f1;"></div>
  <div class="a" style="left:220.7px;top:131.20px;width:0.50px;height:83.04px;background:#f1f1f1;"></div>
  <div class="a" style="left:227.3px;top:131.20px;width:0.50px;height:83.04px;background:#f1f1f1;"></div>
  <div class="a" style="left:295.3px;top:131.20px;width:0.50px;height:83.04px;background:#f1f1f1;"></div>
  <div class="a" style="left:316.2px;top:131.20px;width:0.50px;height:83.04px;background:#f1f1f1;"></div>
  <div class="a" style="left:336.2px;top:131.20px;width:0.50px;height:83.04px;background:#f1f1f1;"></div>
  <div class="a" style="left:385px;top:131.20px;width:0.50px;height:83.04px;background:#f1f1f1;"></div>
  <div class="a" style="left:404px;top:131.20px;width:0.50px;height:83.04px;background:#f1f1f1;"></div>
  <div class="a" style="left:451.3px;top:131.20px;width:0.50px;height:83.04px;background:#f1f1f1;"></div>
  <div class="a" style="left:498.9px;top:131.20px;width:0.50px;height:83.04px;background:#f1f1f1;"></div>
  <div class="a" style="left:545.6px;top:131.20px;width:0.50px;height:83.04px;background:#f1f1f1;"></div>
  <div class="a" style="left:593.8px;top:131.20px;width:0.50px;height:83.04px;background:#f1f1f1;"></div>
  <div class="a" style="left:618.5px;top:131.20px;width:0.50px;height:83.04px;background:#f1f1f1;"></div>
  <svg class="a" style="left:119.2px;top:132.80px" width="5" height="5" viewBox="0 0 5 5"><rect x="0.3" y="0.3" width="4.4" height="4.4" fill="#f0f0f0" stroke="#a8a8a8" stroke-width="0.5"/><path d="M1.3 2.5 H3.7 M2.5 1.3 V3.7" stroke="#3a3a3a" stroke-width="0.55"/></svg>
  <div class="t" style="left:127.6px;top:132.00px;line-height:7px;color:#282838">Hofmann</div>
  <div class="t" style="left:174.8px;top:132.00px;line-height:7px;color:#282838">Elli</div>
  <svg class="a" style="left:221.2px;top:132.10px" width="5" height="6.2" viewBox="0 0 5 6.2"><circle cx="2.5" cy="2" r="1.6" fill="none" stroke="#2e2e2e" stroke-width="0.85"/><path d="M2.5 3.5 V6.1 M1.3 4.9 H3.7" stroke="#2e2e2e" stroke-width="0.8"/></svg>
  <div class="t" style="left:228.5px;top:132.00px;line-height:7px;color:#282838">23.06.1990</div>
  <div class="t" style="left:296.5px;top:132.00px;line-height:7px;color:#282838">33</div>
  <svg class="a" style="left:317px;top:132.40px" width="6" height="5.5" viewBox="0 0 6 5.5"><path d="M0.45 5 V2.8 Q1.2 1.3 3 0.45 Q4.8 1.3 5.55 2.8 V5 Z" fill="#fff" stroke="#858585" stroke-width="0.65"/></svg>
  <div class="t" style="left:338px;top:132.00px;line-height:7px;color:#282838">7823309730</div>
  <svg class="a" style="left:385px;top:132.20px" width="5.5" height="5" viewBox="0 0 5.5 5"><path d="M0.5 1.7 h2.3 V0.5 L5 2.5 L2.8 4.5 V3.3 H0.5 Z" fill="#f6d8cc" stroke="#d86a48" stroke-width="0.7"/></svg>
  <div class="t" style="left:405.5px;top:132.00px;line-height:7px;color:#282838">14.07.2023 08:25</div>
  <div class="t" style="left:453px;top:132.00px;line-height:7px;color:#282838">Chirurgie</div>
  <div class="t" style="left:500px;top:132.00px;line-height:7px;color:#282838">Station 2</div>
  <div class="t" style="left:547px;top:132.00px;line-height:7px;color:#282838">19.07.2023 11:47</div>
  <div class="t" style="left:594px;top:132.00px;line-height:7px;color:#282838">K86.1</div>
  <div class="t" style="left:620px;top:132.00px;line-height:7px;color:#282838">Hauptdiagnose fehlt, Medizinische Leistu</div>
  <svg class="a" style="left:119.2px;top:139.72px" width="5" height="5" viewBox="0 0 5 5"><rect x="0.3" y="0.3" width="4.4" height="4.4" fill="#f0f0f0" stroke="#a8a8a8" stroke-width="0.5"/><path d="M1.3 2.5 H3.7 M2.5 1.3 V3.7" stroke="#3a3a3a" stroke-width="0.55"/></svg>
  <div class="t" style="left:127.6px;top:138.92px;line-height:7px;color:#282838">Huber</div>
  <div class="t" style="left:174.8px;top:138.92px;line-height:7px;color:#282838">Gregor</div>
  <svg class="a" style="left:221.2px;top:138.72px" width="5.5" height="6" viewBox="0 0 5.5 6"><circle cx="2.2" cy="3.6" r="1.7" fill="none" stroke="#2e2e2e" stroke-width="0.85"/><path d="M3.4 2.4 L5 0.8 M3.5 0.7 H5.1 V2.3" stroke="#2e2e2e" stroke-width="0.8" fill="none"/></svg>
  <div class="t" style="left:228.5px;top:138.92px;line-height:7px;color:#282838">18.06.1955</div>
  <div class="t" style="left:296.5px;top:138.92px;line-height:7px;color:#282838">68</div>
  <svg class="a" style="left:317px;top:139.32px" width="6" height="5.5" viewBox="0 0 6 5.5"><path d="M0.45 5 V2.8 Q1.2 1.3 3 0.45 Q4.8 1.3 5.55 2.8 V5 Z" fill="#fff" stroke="#858585" stroke-width="0.65"/></svg>
  <div class="t" style="left:338px;top:138.92px;line-height:7px;color:#282838">7823309715</div>
  <svg class="a" style="left:385px;top:139.12px" width="5.5" height="5" viewBox="0 0 5.5 5"><path d="M0.5 1.7 h2.3 V0.5 L5 2.5 L2.8 4.5 V3.3 H0.5 Z" fill="#f6d8cc" stroke="#d86a48" stroke-width="0.7"/></svg>
  <div class="t" style="left:405.5px;top:138.92px;line-height:7px;color:#282838">10.07.2023 07:55</div>
  <div class="t" style="left:453px;top:138.92px;line-height:7px;color:#282838">Chirurgie</div>
  <div class="t" style="left:500px;top:138.92px;line-height:7px;color:#282838">Station 1</div>
  <div class="t" style="left:547px;top:138.92px;line-height:7px;color:#282838">20.07.2023 11:16</div>
  <div class="t" style="left:594px;top:138.92px;line-height:7px;color:#282838">K57.1</div>
  <div class="t" style="left:620px;top:138.92px;line-height:7px;color:#282838">Hauptdiagnose fehlt</div>
  <svg class="a" style="left:119.2px;top:146.64px" width="5" height="5" viewBox="0 0 5 5"><rect x="0.3" y="0.3" width="4.4" height="4.4" fill="#f0f0f0" stroke="#a8a8a8" stroke-width="0.5"/><path d="M1.3 2.5 H3.7 M2.5 1.3 V3.7" stroke="#3a3a3a" stroke-width="0.55"/></svg>
  <div class="t" style="left:127.6px;top:145.84px;line-height:7px;color:#282838">Albrecht</div>
  <div class="t" style="left:174.8px;top:145.84px;line-height:7px;color:#282838">Philip</div>
  <svg class="a" style="left:221.2px;top:145.64px" width="5.5" height="6" viewBox="0 0 5.5 6"><circle cx="2.2" cy="3.6" r="1.7" fill="none" stroke="#2e2e2e" stroke-width="0.85"/><path d="M3.4 2.4 L5 0.8 M3.5 0.7 H5.1 V2.3" stroke="#2e2e2e" stroke-width="0.8" fill="none"/></svg>
  <div class="t" style="left:228.5px;top:145.84px;line-height:7px;color:#282838">11.02.1975</div>
  <div class="t" style="left:296.5px;top:145.84px;line-height:7px;color:#282838">48</div>
  <svg class="a" style="left:317px;top:146.24px" width="6" height="5.5" viewBox="0 0 6 5.5"><path d="M0.45 5 V2.8 Q1.2 1.3 3 0.45 Q4.8 1.3 5.55 2.8 V5 Z" fill="#fff" stroke="#858585" stroke-width="0.65"/></svg>
  <div class="t" style="left:338px;top:145.84px;line-height:7px;color:#282838">7823309729</div>
  <svg class="a" style="left:385px;top:146.04px" width="5.5" height="5" viewBox="0 0 5.5 5"><path d="M0.5 1.7 h2.3 V0.5 L5 2.5 L2.8 4.5 V3.3 H0.5 Z" fill="#f6d8cc" stroke="#d86a48" stroke-width="0.7"/></svg>
  <div class="t" style="left:405.5px;top:145.84px;line-height:7px;color:#282838">17.07.2023 11:26</div>
  <div class="t" style="left:453px;top:145.84px;line-height:7px;color:#282838">Chirurgie</div>
  <div class="t" style="left:500px;top:145.84px;line-height:7px;color:#282838">Station 3</div>
  <div class="t" style="left:547px;top:145.84px;line-height:7px;color:#282838">24.07.2023 10:15</div>
  <div class="t" style="left:594px;top:145.84px;line-height:7px;color:#282838">S52.51</div>
  <div class="t" style="left:620px;top:145.84px;line-height:7px;color:#282838">Hauptdiagnose fehlt, Medizinische Leistu</div>
  <svg class="a" style="left:119.2px;top:153.56px" width="5" height="5" viewBox="0 0 5 5"><rect x="0.3" y="0.3" width="4.4" height="4.4" fill="#f0f0f0" stroke="#a8a8a8" stroke-width="0.5"/><path d="M1.3 2.5 H3.7 M2.5 1.3 V3.7" stroke="#3a3a3a" stroke-width="0.55"/></svg>
  <div class="t" style="left:127.6px;top:152.76px;line-height:7px;color:#282838">Moser</div>
  <div class="t" style="left:174.8px;top:152.76px;line-height:7px;color:#282838">Johann</div>
  <svg class="a" style="left:221.2px;top:152.56px" width="5.5" height="6" viewBox="0 0 5.5 6"><circle cx="2.2" cy="3.6" r="1.7" fill="none" stroke="#2e2e2e" stroke-width="0.85"/><path d="M3.4 2.4 L5 0.8 M3.5 0.7 H5.1 V2.3" stroke="#2e2e2e" stroke-width="0.8" fill="none"/></svg>
  <div class="t" style="left:228.5px;top:152.76px;line-height:7px;color:#282838">25.01.1955</div>
  <div class="t" style="left:296.5px;top:152.76px;line-height:7px;color:#282838">68</div>
  <svg class="a" style="left:317px;top:153.16px" width="6" height="5.5" viewBox="0 0 6 5.5"><path d="M0.45 5 V2.8 Q1.2 1.3 3 0.45 Q4.8 1.3 5.55 2.8 V5 Z" fill="#fff" stroke="#858585" stroke-width="0.65"/></svg>
  <div class="t" style="left:338px;top:152.76px;line-height:7px;color:#282838">7823309717</div>
  <svg class="a" style="left:385px;top:152.96px" width="5.5" height="5" viewBox="0 0 5.5 5"><path d="M0.5 1.7 h2.3 V0.5 L5 2.5 L2.8 4.5 V3.3 H0.5 Z" fill="#f6d8cc" stroke="#d86a48" stroke-width="0.7"/></svg>
  <div class="t" style="left:405.5px;top:152.76px;line-height:7px;color:#282838">25.07.2023 10:10</div>
  <div class="t" style="left:453px;top:152.76px;line-height:7px;color:#282838">Chirurgie</div>
  <div class="t" style="left:500px;top:152.76px;line-height:7px;color:#282838">Station 1</div>
  <div class="t" style="left:547px;top:152.76px;line-height:7px;color:#282838">01.08.2023 10:15</div>
  <div class="t" style="left:594px;top:152.76px;line-height:7px;color:#282838">M16.9</div>
  <div class="t" style="left:620px;top:152.76px;line-height:7px;color:#282838">Hauptdiagnose fehlt, Medizinische Leistu</div>
  <svg class="a" style="left:119.2px;top:160.48px" width="5" height="5" viewBox="0 0 5 5"><rect x="0.3" y="0.3" width="4.4" height="4.4" fill="#f0f0f0" stroke="#a8a8a8" stroke-width="0.5"/><path d="M1.3 2.5 H3.7 M2.5 1.3 V3.7" stroke="#3a3a3a" stroke-width="0.55"/></svg>
  <div class="t" style="left:127.6px;top:159.68px;line-height:7px;color:#282838">Wallenstein</div>
  <div class="t" style="left:174.8px;top:159.68px;line-height:7px;color:#282838">Hans-Jörg</div>
  <svg class="a" style="left:221.2px;top:159.48px" width="5.5" height="6" viewBox="0 0 5.5 6"><circle cx="2.2" cy="3.6" r="1.7" fill="none" stroke="#2e2e2e" stroke-width="0.85"/><path d="M3.4 2.4 L5 0.8 M3.5 0.7 H5.1 V2.3" stroke="#2e2e2e" stroke-width="0.8" fill="none"/></svg>
  <div class="t" style="left:228.5px;top:159.68px;line-height:7px;color:#282838">01.12.1964</div>
  <div class="t" style="left:296.5px;top:159.68px;line-height:7px;color:#282838">58</div>
  <svg class="a" style="left:317px;top:160.08px" width="6" height="5.5" viewBox="0 0 6 5.5"><path d="M0.45 5 V2.8 Q1.2 1.3 3 0.45 Q4.8 1.3 5.55 2.8 V5 Z" fill="#fff" stroke="#858585" stroke-width="0.65"/></svg>
  <div class="t" style="left:338px;top:159.68px;line-height:7px;color:#282838">7823309720</div>
  <svg class="a" style="left:385px;top:159.88px" width="5.5" height="5" viewBox="0 0 5.5 5"><path d="M0.5 1.7 h2.3 V0.5 L5 2.5 L2.8 4.5 V3.3 H0.5 Z" fill="#f6d8cc" stroke="#d86a48" stroke-width="0.7"/></svg>
  <div class="t" style="left:405.5px;top:159.68px;line-height:7px;color:#282838">28.07.2023 08:58</div>
  <div class="t" style="left:453px;top:159.68px;line-height:7px;color:#282838">Chirurgie</div>
  <div class="t" style="left:500px;top:159.68px;line-height:7px;color:#282838">Station 4</div>
  <div class="t" style="left:547px;top:159.68px;line-height:7px;color:#282838">04.08.2023 09:02</div>
  <div class="t" style="left:594px;top:159.68px;line-height:7px;color:#282838">K56.2</div>
  <div class="t" style="left:620px;top:159.68px;line-height:7px;color:#282838">Kombination medizinischer Leistungen a</div>
  <svg class="a" style="left:119.2px;top:167.40px" width="5" height="5" viewBox="0 0 5 5"><rect x="0.3" y="0.3" width="4.4" height="4.4" fill="#f0f0f0" stroke="#a8a8a8" stroke-width="0.5"/><path d="M1.3 2.5 H3.7 M2.5 1.3 V3.7" stroke="#3a3a3a" stroke-width="0.55"/></svg>
  <div class="t" style="left:127.6px;top:166.60px;line-height:7px;color:#282838">Gruber</div>
  <div class="t" style="left:174.8px;top:166.60px;line-height:7px;color:#282838">Raffael</div>
  <svg class="a" style="left:221.2px;top:166.40px" width="5.5" height="6" viewBox="0 0 5.5 6"><circle cx="2.2" cy="3.6" r="1.7" fill="none" stroke="#2e2e2e" stroke-width="0.85"/><path d="M3.4 2.4 L5 0.8 M3.5 0.7 H5.1 V2.3" stroke="#2e2e2e" stroke-width="0.8" fill="none"/></svg>
  <div class="t" style="left:228.5px;top:166.60px;line-height:7px;color:#282838">02.12.1965</div>
  <div class="t" style="left:296.5px;top:166.60px;line-height:7px;color:#282838">57</div>
  <svg class="a" style="left:317px;top:167.00px" width="6" height="5.5" viewBox="0 0 6 5.5"><path d="M0.45 5 V2.8 Q1.2 1.3 3 0.45 Q4.8 1.3 5.55 2.8 V5 Z" fill="#fff" stroke="#858585" stroke-width="0.65"/></svg>
  <div class="t" style="left:338px;top:166.60px;line-height:7px;color:#282838">7823309722</div>
  <svg class="a" style="left:385px;top:166.80px" width="5.5" height="5" viewBox="0 0 5.5 5"><path d="M0.5 1.7 h2.3 V0.5 L5 2.5 L2.8 4.5 V3.3 H0.5 Z" fill="#f6d8cc" stroke="#d86a48" stroke-width="0.7"/></svg>
  <div class="t" style="left:405.5px;top:166.60px;line-height:7px;color:#282838">28.07.2023 09:14</div>
  <div class="t" style="left:453px;top:166.60px;line-height:7px;color:#282838">Chirurgie</div>
  <div class="t" style="left:500px;top:166.60px;line-height:7px;color:#282838">Station 3</div>
  <div class="t" style="left:547px;top:166.60px;line-height:7px;color:#282838">04.08.2023 09:19</div>
  <div class="t" style="left:594px;top:166.60px;line-height:7px;color:#282838">K66.2</div>
  <div class="t" style="left:620px;top:166.60px;line-height:7px;color:#282838">Medizinische Leistung ohne plausible Dia</div>
  <svg class="a" style="left:119.2px;top:174.32px" width="5" height="5" viewBox="0 0 5 5"><rect x="0.3" y="0.3" width="4.4" height="4.4" fill="#f0f0f0" stroke="#a8a8a8" stroke-width="0.5"/><path d="M1.3 2.5 H3.7 M2.5 1.3 V3.7" stroke="#3a3a3a" stroke-width="0.55"/></svg>
  <div class="t" style="left:127.6px;top:173.52px;line-height:7px;color:#282838">Jacob</div>
  <div class="t" style="left:174.8px;top:173.52px;line-height:7px;color:#282838">Cornelius</div>
  <svg class="a" style="left:221.2px;top:173.32px" width="5.5" height="6" viewBox="0 0 5.5 6"><circle cx="2.2" cy="3.6" r="1.7" fill="none" stroke="#2e2e2e" stroke-width="0.85"/><path d="M3.4 2.4 L5 0.8 M3.5 0.7 H5.1 V2.3" stroke="#2e2e2e" stroke-width="0.8" fill="none"/></svg>
  <div class="t" style="left:228.5px;top:173.52px;line-height:7px;color:#282838">05.02.1982</div>
  <div class="t" style="left:296.5px;top:173.52px;line-height:7px;color:#282838">41</div>
  <svg class="a" style="left:317px;top:173.92px" width="6" height="5.5" viewBox="0 0 6 5.5"><path d="M0.45 5 V2.8 Q1.2 1.3 3 0.45 Q4.8 1.3 5.55 2.8 V5 Z" fill="#fff" stroke="#858585" stroke-width="0.65"/></svg>
  <div class="t" style="left:338px;top:173.52px;line-height:7px;color:#282838">7823309725</div>
  <svg class="a" style="left:385px;top:173.72px" width="5.5" height="5" viewBox="0 0 5.5 5"><path d="M0.5 1.7 h2.3 V0.5 L5 2.5 L2.8 4.5 V3.3 H0.5 Z" fill="#f6d8cc" stroke="#d86a48" stroke-width="0.7"/></svg>
  <div class="t" style="left:405.5px;top:173.52px;line-height:7px;color:#282838">01.08.2023 10:39</div>
  <div class="t" style="left:453px;top:173.52px;line-height:7px;color:#282838">Chirurgie</div>
  <div class="t" style="left:500px;top:173.52px;line-height:7px;color:#282838">Station 1</div>
  <div class="t" style="left:547px;top:173.52px;line-height:7px;color:#282838">05.08.2023 10:45</div>
  <div class="t" style="left:594px;top:173.52px;line-height:7px;color:#282838">S02.10</div>
  <div class="t" style="left:620px;top:173.52px;line-height:7px;color:#282838">Medizinische Leistung ohne plausible Dia</div>
  <svg class="a" style="left:119.2px;top:181.24px" width="5" height="5" viewBox="0 0 5 5"><rect x="0.3" y="0.3" width="4.4" height="4.4" fill="#f0f0f0" stroke="#a8a8a8" stroke-width="0.5"/><path d="M1.3 2.5 H3.7 M2.5 1.3 V3.7" stroke="#3a3a3a" stroke-width="0.55"/></svg>
  <div class="t" style="left:127.6px;top:180.44px;line-height:7px;color:#282838">Liebert</div>
  <div class="t" style="left:174.8px;top:180.44px;line-height:7px;color:#282838">Adrian</div>
  <svg class="a" style="left:221.2px;top:180.24px" width="5.5" height="6" viewBox="0 0 5.5 6"><circle cx="2.2" cy="3.6" r="1.7" fill="none" stroke="#2e2e2e" stroke-width="0.85"/><path d="M3.4 2.4 L5 0.8 M3.5 0.7 H5.1 V2.3" stroke="#2e2e2e" stroke-width="0.8" fill="none"/></svg>
  <div class="t" style="left:228.5px;top:180.44px;line-height:7px;color:#282838">22.01.1996</div>
  <div class="t" style="left:296.5px;top:180.44px;line-height:7px;color:#282838">27</div>
  <svg class="a" style="left:317px;top:180.84px" width="6" height="5.5" viewBox="0 0 6 5.5"><path d="M0.45 5 V2.8 Q1.2 1.3 3 0.45 Q4.8 1.3 5.55 2.8 V5 Z" fill="#fff" stroke="#858585" stroke-width="0.65"/></svg>
  <div class="t" style="left:338px;top:180.44px;line-height:7px;color:#282838">7823309726</div>
  <svg class="a" style="left:385px;top:180.64px" width="5.5" height="5" viewBox="0 0 5.5 5"><path d="M0.5 1.7 h2.3 V0.5 L5 2.5 L2.8 4.5 V3.3 H0.5 Z" fill="#f6d8cc" stroke="#d86a48" stroke-width="0.7"/></svg>
  <div class="t" style="left:405.5px;top:180.44px;line-height:7px;color:#282838">02.08.2023 10:47</div>
  <div class="t" style="left:453px;top:180.44px;line-height:7px;color:#282838">Chirurgie</div>
  <div class="t" style="left:500px;top:180.44px;line-height:7px;color:#282838">Station 4</div>
  <div class="t" style="left:547px;top:180.44px;line-height:7px;color:#282838">05.08.2023 11:01</div>
  <div class="t" style="left:594px;top:180.44px;line-height:7px;color:#282838">S82.5</div>
  <div class="t" style="left:620px;top:180.44px;line-height:7px;color:#282838">Hauptdiagnose fehlt, Medizinische Leistu</div>
  <svg class="a" style="left:119.2px;top:188.16px" width="5" height="5" viewBox="0 0 5 5"><rect x="0.3" y="0.3" width="4.4" height="4.4" fill="#f0f0f0" stroke="#a8a8a8" stroke-width="0.5"/><path d="M1.3 2.5 H3.7 M2.5 1.3 V3.7" stroke="#3a3a3a" stroke-width="0.55"/></svg>
  <div class="t" style="left:127.6px;top:187.36px;line-height:7px;color:#282838">Wachauer</div>
  <div class="t" style="left:174.8px;top:187.36px;line-height:7px;color:#282838">Julia Maria</div>
  <svg class="a" style="left:221.2px;top:187.46px" width="5" height="6.2" viewBox="0 0 5 6.2"><circle cx="2.5" cy="2" r="1.6" fill="none" stroke="#2e2e2e" stroke-width="0.85"/><path d="M2.5 3.5 V6.1 M1.3 4.9 H3.7" stroke="#2e2e2e" stroke-width="0.8"/></svg>
  <div class="t" style="left:228.5px;top:187.36px;line-height:7px;color:#282838">27.09.1973</div>
  <div class="t" style="left:296.5px;top:187.36px;line-height:7px;color:#282838">49</div>
  <svg class="a" style="left:317px;top:187.76px" width="6" height="5.5" viewBox="0 0 6 5.5"><path d="M0.45 5 V2.8 Q1.2 1.3 3 0.45 Q4.8 1.3 5.55 2.8 V5 Z" fill="#fff" stroke="#858585" stroke-width="0.65"/></svg>
  <div class="t" style="left:338px;top:187.36px;line-height:7px;color:#282838">7823309724</div>
  <svg class="a" style="left:385px;top:187.56px" width="5.5" height="5" viewBox="0 0 5.5 5"><path d="M0.5 1.7 h2.3 V0.5 L5 2.5 L2.8 4.5 V3.3 H0.5 Z" fill="#f6d8cc" stroke="#d86a48" stroke-width="0.7"/></svg>
  <div class="t" style="left:405.5px;top:187.36px;line-height:7px;color:#282838">26.07.2023 09:55</div>
  <div class="t" style="left:453px;top:187.36px;line-height:7px;color:#282838">Chirurgie</div>
  <div class="t" style="left:500px;top:187.36px;line-height:7px;color:#282838">Station 5</div>
  <div class="t" style="left:547px;top:187.36px;line-height:7px;color:#282838">06.08.2023 10:19</div>
  <div class="t" style="left:594px;top:187.36px;line-height:7px;color:#282838">S82.3</div>
  <div class="t" style="left:620px;top:187.36px;line-height:7px;color:#282838">Hauptdiagnose fehlt</div>
  <svg class="a" style="left:119.2px;top:195.08px" width="5" height="5" viewBox="0 0 5 5"><rect x="0.3" y="0.3" width="4.4" height="4.4" fill="#f0f0f0" stroke="#a8a8a8" stroke-width="0.5"/><path d="M1.3 2.5 H3.7 M2.5 1.3 V3.7" stroke="#3a3a3a" stroke-width="0.55"/></svg>
  <div class="t" style="left:127.6px;top:194.28px;line-height:7px;color:#282838">Schubert</div>
  <div class="t" style="left:174.8px;top:194.28px;line-height:7px;color:#282838">Emelie</div>
  <svg class="a" style="left:221.2px;top:194.38px" width="5" height="6.2" viewBox="0 0 5 6.2"><circle cx="2.5" cy="2" r="1.6" fill="none" stroke="#2e2e2e" stroke-width="0.85"/><path d="M2.5 3.5 V6.1 M1.3 4.9 H3.7" stroke="#2e2e2e" stroke-width="0.8"/></svg>
  <div class="t" style="left:228.5px;top:194.28px;line-height:7px;color:#282838">26.01.1975</div>
  <div class="t" style="left:296.5px;top:194.28px;line-height:7px;color:#282838">48</div>
  <svg class="a" style="left:317px;top:194.68px" width="6" height="5.5" viewBox="0 0 6 5.5"><path d="M0.45 5 V2.8 Q1.2 1.3 3 0.45 Q4.8 1.3 5.55 2.8 V5 Z" fill="#fff" stroke="#858585" stroke-width="0.65"/></svg>
  <div class="t" style="left:338px;top:194.28px;line-height:7px;color:#282838">7823309719</div>
  <svg class="a" style="left:385px;top:194.48px" width="5.5" height="5" viewBox="0 0 5.5 5"><path d="M0.5 1.7 h2.3 V0.5 L5 2.5 L2.8 4.5 V3.3 H0.5 Z" fill="#f6d8cc" stroke="#d86a48" stroke-width="0.7"/></svg>
  <div class="t" style="left:405.5px;top:194.28px;line-height:7px;color:#282838">03.08.2023 08:52</div>
  <div class="t" style="left:453px;top:194.28px;line-height:7px;color:#282838">Chirurgie</div>
  <div class="t" style="left:500px;top:194.28px;line-height:7px;color:#282838">Station 1</div>
  <div class="t" style="left:547px;top:194.28px;line-height:7px;color:#282838">07.08.2023 08:55</div>
  <div class="t" style="left:594px;top:194.28px;line-height:7px;color:#282838">J44.19</div>
  <div class="t" style="left:620px;top:194.28px;line-height:7px;color:#282838">Unzureichend abgeklärte Hauptdiagnose</div>
  <svg class="a" style="left:119.2px;top:202.00px" width="5" height="5" viewBox="0 0 5 5"><rect x="0.3" y="0.3" width="4.4" height="4.4" fill="#f0f0f0" stroke="#a8a8a8" stroke-width="0.5"/><path d="M1.3 2.5 H3.7 M2.5 1.3 V3.7" stroke="#3a3a3a" stroke-width="0.55"/></svg>
  <div class="t" style="left:127.6px;top:201.20px;line-height:7px;color:#282838">Andres</div>
  <div class="t" style="left:174.8px;top:201.20px;line-height:7px;color:#282838">Vanessa</div>
  <svg class="a" style="left:221.2px;top:201.30px" width="5" height="6.2" viewBox="0 0 5 6.2"><circle cx="2.5" cy="2" r="1.6" fill="none" stroke="#2e2e2e" stroke-width="0.85"/><path d="M2.5 3.5 V6.1 M1.3 4.9 H3.7" stroke="#2e2e2e" stroke-width="0.8"/></svg>
  <div class="t" style="left:228.5px;top:201.20px;line-height:7px;color:#282838">31.08.1986</div>
  <div class="t" style="left:296.5px;top:201.20px;line-height:7px;color:#282838">36</div>
  <svg class="a" style="left:317px;top:201.60px" width="6" height="5.5" viewBox="0 0 6 5.5"><path d="M0.45 5 V2.8 Q1.2 1.3 3 0.45 Q4.8 1.3 5.55 2.8 V5 Z" fill="#fff" stroke="#858585" stroke-width="0.65"/></svg>
  <div class="t" style="left:338px;top:201.20px;line-height:7px;color:#282838">7823309721</div>
  <svg class="a" style="left:385px;top:201.40px" width="5.5" height="5" viewBox="0 0 5.5 5"><path d="M0.5 1.7 h2.3 V0.5 L5 2.5 L2.8 4.5 V3.3 H0.5 Z" fill="#f6d8cc" stroke="#d86a48" stroke-width="0.7"/></svg>
  <div class="t" style="left:405.5px;top:201.20px;line-height:7px;color:#282838">03.08.2023 09:05</div>
  <div class="t" style="left:453px;top:201.20px;line-height:7px;color:#282838">Chirurgie</div>
  <div class="t" style="left:500px;top:201.20px;line-height:7px;color:#282838">Station 2</div>
  <div class="t" style="left:547px;top:201.20px;line-height:7px;color:#282838">07.08.2023 09:07</div>
  <div class="t" style="left:594px;top:201.20px;line-height:7px;color:#282838">K56.5</div>
  <div class="t" style="left:620px;top:201.20px;line-height:7px;color:#282838">Leistungserbringung am Entlassungstag</div>
  <svg class="a" style="left:119.2px;top:208.92px" width="5" height="5" viewBox="0 0 5 5"><rect x="0.3" y="0.3" width="4.4" height="4.4" fill="#f0f0f0" stroke="#a8a8a8" stroke-width="0.5"/><path d="M1.3 2.5 H3.7 M2.5 1.3 V3.7" stroke="#3a3a3a" stroke-width="0.55"/></svg>
  <div class="t" style="left:127.6px;top:208.12px;line-height:7px;color:#282838">Meier</div>
  <div class="t" style="left:174.8px;top:208.12px;line-height:7px;color:#282838">Barbara</div>
  <svg class="a" style="left:221.2px;top:208.22px" width="5" height="6.2" viewBox="0 0 5 6.2"><circle cx="2.5" cy="2" r="1.6" fill="none" stroke="#2e2e2e" stroke-width="0.85"/><path d="M2.5 3.5 V6.1 M1.3 4.9 H3.7" stroke="#2e2e2e" stroke-width="0.8"/></svg>
  <div class="t" style="left:228.5px;top:208.12px;line-height:7px;color:#282838">22.05.1967</div>
  <div class="t" style="left:296.5px;top:208.12px;line-height:7px;color:#282838">56</div>
  <svg class="a" style="left:317px;top:208.52px" width="6" height="5.5" viewBox="0 0 6 5.5"><path d="M0.45 5 V2.8 Q1.2 1.3 3 0.45 Q4.8 1.3 5.55 2.8 V5 Z" fill="#fff" stroke="#858585" stroke-width="0.65"/></svg>
  <div class="t" style="left:338px;top:208.12px;line-height:7px;color:#282838">7823309718</div>
  <svg class="a" style="left:385px;top:208.32px" width="5.5" height="5" viewBox="0 0 5.5 5"><path d="M0.5 1.7 h2.3 V0.5 L5 2.5 L2.8 4.5 V3.3 H0.5 Z" fill="#f6d8cc" stroke="#d86a48" stroke-width="0.7"/></svg>
  <div class="t" style="left:405.5px;top:208.12px;line-height:7px;color:#282838">03.08.2023 08:45</div>
  <div class="t" style="left:453px;top:208.12px;line-height:7px;color:#282838">Chirurgie</div>
  <div class="t" style="left:500px;top:208.12px;line-height:7px;color:#282838">Station 4</div>
  <div class="t" style="left:547px;top:208.12px;line-height:7px;color:#282838">07.08.2023 09:33</div>
  <div class="t" style="left:594px;top:208.12px;line-height:7px;color:#282838">K35.2</div>
  <div class="t" style="left:620px;top:208.12px;line-height:7px;color:#282838">Diagnose ohne entsprechende Leistung</div>
  <div class="a" style="left:119px;top:215.04px;width:603.50px;height:5.00px;background:#f6f6f6;"></div>
  <div class="a" style="left:126px;top:214.04px;width:596.50px;height:1.00px;background:#555;"></div>
  <div class="t" style="left:127.6px;top:214.84px;line-height:7px;color:#282838">Anzahl 12</div>
  <div class="a" style="left:722.5px;top:122.10px;width:5.50px;height:173.50px;background:#eff0f4;"></div>
  <div class="a" style="left:722.5px;top:122.10px;width:5.50px;height:9.20px;background:#fafafa;"></div>
  <div class="a" style="left:722.8px;top:131.60px;width:4.90px;height:5.40px;background:#d9e0f4;"></div>
  <div class="a" style="left:722.8px;top:289.60px;width:4.90px;height:5.40px;background:#d9e0f4;"></div>
  <svg class="a" style="left:722.8px;top:131.6px" width="4.9" height="5.4" viewBox="0 0 4.9 5.4"><path d="M1 3.6 L2.45 1.7 L3.9 3.6" fill="none" stroke="#4a5cb0" stroke-width="0.8"/></svg>
  <svg class="a" style="left:722.8px;top:289.6px" width="4.9" height="5.4" viewBox="0 0 4.9 5.4"><path d="M1 1.8 L2.45 3.7 L3.9 1.8" fill="none" stroke="#4a5cb0" stroke-width="0.8"/></svg>
  <!-- details -->
  <div class="a" style="left:111px;top:295.60px;width:617.00px;height:7.40px;background:#d3d9ef;"></div>
  <div class="a" style="left:111px;top:295.60px;width:26.60px;height:7.40px;background:#eaeef9;"></div>
  <div class="t" style="left:114.2px;top:296.30px;">Fall</div>
  <div class="t" style="left:140.9px;top:296.30px;">Patient</div>
  <div class="t" style="left:168px;top:296.30px;">Aufenthalt</div>
  <div class="t" style="left:199.8px;top:296.30px;">Fallbezug</div>
  <div class="t" style="left:229.3px;top:296.30px;">Fehlerliste</div>
  <div class="t" style="left:261px;top:296.30px;">Kodierprobleme</div>
  <div class="t" style="left:304.5px;top:296.30px;">Fallbemerkung</div>
  <div class="t" style="left:346.7px;top:296.30px;">Kostenübernehmer</div>
  <div class="t" style="left:399.5px;top:296.30px;">Anf.med.Begründung</div>
  <div class="a" style="left:137.6px;top:296.30px;width:0.60px;height:6.20px;background:#c0c9e6;"></div>
  <div class="a" style="left:163.9px;top:296.30px;width:0.60px;height:6.20px;background:#c0c9e6;"></div>
  <div class="a" style="left:196px;top:296.30px;width:0.60px;height:6.20px;background:#c0c9e6;"></div>
  <div class="a" style="left:226.4px;top:296.30px;width:0.60px;height:6.20px;background:#c0c9e6;"></div>
  <div class="a" style="left:258.1px;top:296.30px;width:0.60px;height:6.20px;background:#c0c9e6;"></div>
  <div class="a" style="left:301.5px;top:296.30px;width:0.60px;height:6.20px;background:#c0c9e6;"></div>
  <div class="a" style="left:343.7px;top:296.30px;width:0.60px;height:6.20px;background:#c0c9e6;"></div>
  <div class="a" style="left:395.8px;top:296.30px;width:0.60px;height:6.20px;background:#c0c9e6;"></div>
  <div class="a" style="left:452px;top:296.30px;width:0.60px;height:6.20px;background:#c0c9e6;"></div>
  <div class="a" style="left:722.8px;top:300.00px;width:2.40px;height:0.70px;background:#6a78b8;"></div>
  <div class="a" style="left:111px;top:302.90px;width:617.00px;height:103.70px;background:#e9e9e9;"></div>
  <div class="t" style="left:111.8px;top:303.80px;">Fallnummer</div>
  <div class="a" style="left:185px;top:304.20px;width:122.00px;height:6.00px;background:#fff;"></div>
  <div class="t" style="left:186px;top:303.80px;">7823309730</div>
  <div class="t" style="left:111.8px;top:311.70px;color:#9a9a9a">Einweisung</div>
  <div class="t" style="left:111.8px;top:319.60px;">Einw. Arzt</div>
  <div class="a" style="left:185px;top:320.00px;width:122.00px;height:6.00px;background:#fff;"></div>
  <div class="t" style="left:186px;top:319.60px;">Dr.&nbsp; Arlt</div>
  <div class="t" style="left:111.8px;top:327.50px;">Hausarzt</div>
  <div class="a" style="left:185px;top:327.90px;width:122.00px;height:6.00px;background:#fff;"></div>
  <div class="t" style="left:186px;top:327.50px;">Dr.&nbsp; Arlt</div>
  <div class="t" style="left:111.8px;top:335.40px;">Einw. KH</div>
  <div class="a" style="left:185px;top:335.80px;width:122.00px;height:6.00px;background:#fff;"></div>
  <div class="t" style="left:111.8px;top:343.30px;">Veranl. Stelle</div>
  <div class="a" style="left:185px;top:343.70px;width:122.00px;height:6.00px;background:#fff;"></div>
  <div class="t" style="left:111.8px;top:351.20px;">Einw. Diagnose</div>
  <div class="a" style="left:185px;top:351.60px;width:122.00px;height:6.00px;background:#fff;"></div>
  <div class="t" style="left:186px;top:351.20px;">K83.0</div>
  <div class="t" style="left:111.8px;top:359.10px;">Aufnahmeanlass</div>
  <div class="a" style="left:185px;top:359.50px;width:122.00px;height:6.00px;background:#fff;"></div>
  <div class="t" style="left:186px;top:359.10px;">Einweisung durch einen Arzt</div>
  <div class="t" style="left:313px;top:303.80px;color:#9a9a9a">Aufnahme</div>
  <div class="t" style="left:313px;top:311.70px;">Aufnahmedatum</div>
  <div class="a" style="left:386.5px;top:312.10px;width:127.50px;height:6.00px;background:#fff;"></div>
  <div class="t" style="left:387.5px;top:311.70px;">14.07.2023 08:35</div>
  <div class="t" style="left:313px;top:319.60px;">Aufnahmeart</div>
  <div class="a" style="left:386.5px;top:320.00px;width:127.50px;height:6.00px;background:#fff;"></div>
  <div class="t" style="left:387.5px;top:319.60px;">normale Aufn.</div>
  <div class="t" style="left:313px;top:327.50px;">Aufnahmegrund</div>
  <div class="a" style="left:386.5px;top:327.90px;width:127.50px;height:6.00px;background:#fff;"></div>
  <div class="t" style="left:313px;top:335.40px;">Aufnahmediagnose</div>
  <div class="a" style="left:386.5px;top:335.80px;width:127.50px;height:6.00px;background:#fff;"></div>
  <div class="t" style="left:387.5px;top:335.40px;">K86.1</div>
  <div class="t" style="left:313px;top:343.30px;">Aufnahme/Geburtsgew.</div>
  <div class="a" style="left:386.5px;top:343.70px;width:54.20px;height:6.00px;background:#fff;"></div>
  <div class="a" style="left:483.8px;top:343.70px;width:30.20px;height:6.00px;background:#fff;"></div>
  <div class="t" style="left:313px;top:351.20px;">Vor. Entlassdatum</div>
  <div class="a" style="left:386.5px;top:351.60px;width:54.20px;height:6.00px;background:#fff;"></div>
  <div class="t" style="left:387.5px;top:351.20px;">19.07.2023</div>
  <div class="t" style="left:313px;top:359.10px;">Gepl. Entlassdatum</div>
  <div class="a" style="left:386.5px;top:359.50px;width:54.20px;height:6.00px;background:#fff;"></div>
  <div class="t" style="left:520px;top:303.80px;color:#9a9a9a">Entlassung</div>
  <div class="t" style="left:520px;top:311.70px;">Entlassdatum</div>
  <div class="a" style="left:592.9px;top:312.10px;width:51.20px;height:6.00px;background:#fff;"></div>
  <div class="a" style="left:645px;top:312.10px;width:27.70px;height:6.00px;background:#fff;"></div>
  <div class="t" style="left:646px;top:311.70px;">11:47</div>
  <div class="t" style="left:594px;top:311.70px;">19.07.2023</div>
  <div class="t" style="left:520px;top:319.60px;">Entlassart</div>
  <div class="a" style="left:592.9px;top:320.00px;width:122.10px;height:6.00px;background:#fff;"></div>
  <div class="t" style="left:594px;top:319.60px;">normal entlass.</div>
  <div class="t" style="left:520px;top:327.50px;">Verlegt in</div>
  <div class="a" style="left:592.9px;top:327.90px;width:122.10px;height:6.00px;background:#fff;"></div>
  <div class="t" style="left:520px;top:335.40px;">Arbeitsfähigkeit</div>
  <div class="a" style="left:592.9px;top:335.80px;width:122.10px;height:6.00px;background:#fff;"></div>
  <div class="t" style="left:594px;top:335.40px;">keine Angabe</div>
  <div class="t" style="left:520px;top:343.30px;">Entlassdiagnose</div>
  <div class="a" style="left:592.9px;top:343.70px;width:122.10px;height:6.00px;background:#fff;"></div>
  <div class="t" style="left:520px;top:351.20px;">Tatsächliche VWD</div>
  <div class="a" style="left:592.9px;top:351.60px;width:31.10px;height:6.00px;background:#fff;"></div>
  <div class="t" style="left:594px;top:351.20px;">5</div>
  <div class="t" style="left:520px;top:359.10px;">Chefarzttage</div>
  <div class="a" style="left:592.9px;top:359.50px;width:31.10px;height:6.00px;background:#fff;"></div>
</div>
</body></html>
